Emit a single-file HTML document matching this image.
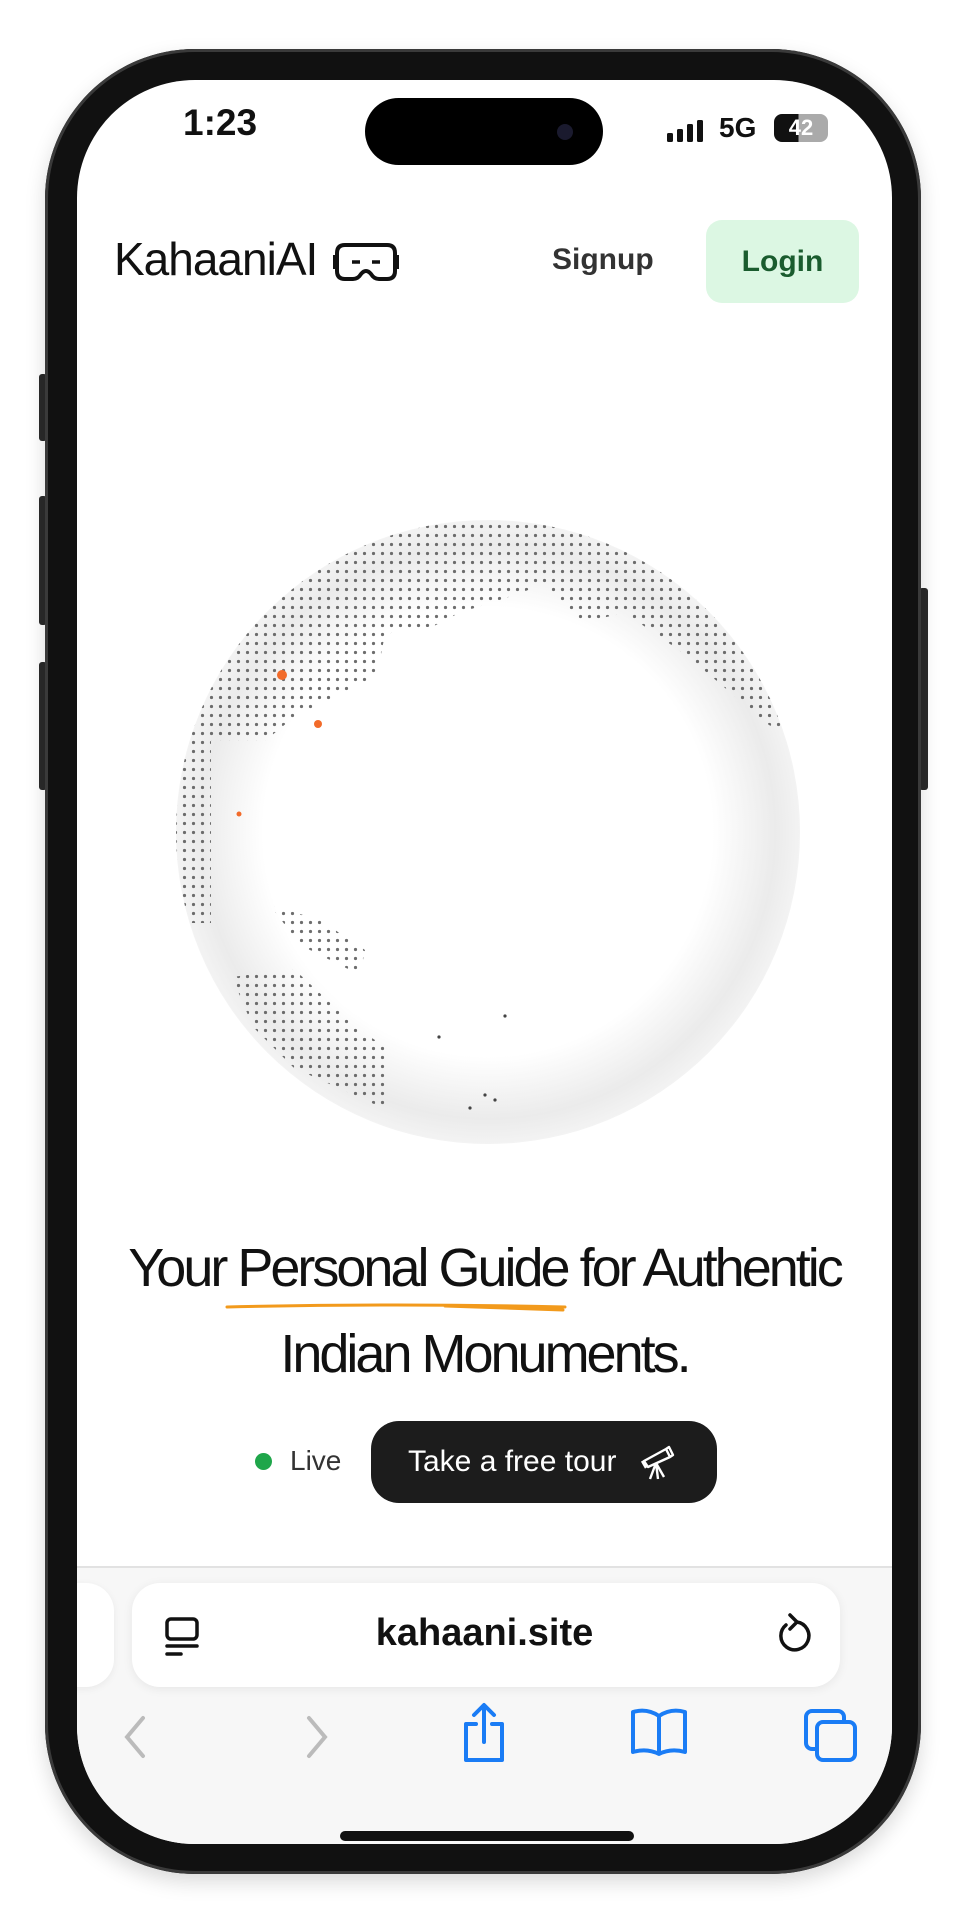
<!DOCTYPE html>
<html><head><meta charset="utf-8"><style>
*{margin:0;padding:0;box-sizing:border-box}
body{width:968px;height:1920px;background:#fff;position:relative;overflow:hidden;font-family:"Liberation Sans",sans-serif}
.abs{position:absolute}
.phone{left:45px;top:49px;width:876px;height:1825px;border-radius:150px;background:#111;box-shadow:0 0 0 3px #3a3a3a inset, 0 8px 20px rgba(0,0,0,.15)}
.screen{left:77px;top:80px;width:815px;height:1764px;border-radius:118px;background:#fff;overflow:hidden}
.btn{background:#2a2a2a;border-radius:3px}
</style></head><body>
<div class="abs btn" style="left:39px;top:374px;width:8px;height:67px"></div>
<div class="abs btn" style="left:39px;top:496px;width:8px;height:129px"></div>
<div class="abs btn" style="left:39px;top:662px;width:8px;height:128px"></div>
<div class="abs btn" style="left:919px;top:588px;width:9px;height:202px"></div>
<div class="abs phone"></div>
<div class="abs screen">
 <div class="abs" style="left:106px;top:22px;font-size:37px;font-weight:bold;color:#111">1:23</div>
 <div class="abs" style="left:288px;top:18px;width:238px;height:67px;border-radius:34px;background:#000"></div>
 <div class="abs" style="left:480px;top:44px;width:16px;height:16px;border-radius:50%;background:#1a1a2e"></div>
 <svg class="abs" style="left:590px;top:40px" width="40" height="22"><rect x="0" y="13" width="6" height="9" rx="1.5" fill="#111"/><rect x="10" y="9" width="6" height="13" rx="1.5" fill="#111"/><rect x="20" y="4" width="6" height="18" rx="1.5" fill="#111"/><rect x="30" y="0" width="6" height="22" rx="1.5" fill="#111"/></svg>
 <div class="abs" style="left:642px;top:32px;font-size:28px;font-weight:bold;color:#111">5G</div>
 <div class="abs" style="left:697px;top:34px;width:54px;height:28px;border-radius:8px;background:linear-gradient(90deg,#111 0 45%,#aaa 45%);color:#fff;font-size:22px;font-weight:bold;text-align:center;line-height:28px">42</div>
 <div class="abs" style="left:37px;top:152px;font-size:46px;color:#111;letter-spacing:-1px">KahaaniAI</div>
 <svg class="abs" style="left:256px;top:161px" width="66" height="42" viewBox="0 0 66 42"><path d="M12 4 H54 Q62 4 62 12 V30 Q62 38 54 38 H46 Q41 38 38 33 Q33 27 28 33 Q25 38 20 38 H12 Q4 38 4 30 V12 Q4 4 12 4Z" fill="none" stroke="#111" stroke-width="4"/><path d="M1 14V28M65 14V28" stroke="#111" stroke-width="3"/><path d="M19 21h8M39 21h8" stroke="#111" stroke-width="3.5"/></svg>
 <div class="abs" style="left:475px;top:163px;font-size:30px;font-weight:bold;color:#333">Signup</div>
 <div class="abs" style="left:629px;top:140px;width:153px;height:83px;border-radius:16px;background:#dcf7e3;color:#1a5c2e;font-size:30px;font-weight:bold;text-align:center;line-height:83px">Login</div>
 <svg class="abs" style="left:0;top:0" width="815" height="1200" viewBox="77 80 815 1200">
  <defs>
   <radialGradient id="g" cx="0.5" cy="0.5" r="0.5"><stop offset="0.72" stop-color="#fff"/><stop offset="0.92" stop-color="#ebebeb"/><stop offset="1" stop-color="#f3f3f3"/></radialGradient>
   <pattern id="d" width="9" height="9" patternUnits="userSpaceOnUse"><circle cx="4.5" cy="4.5" r="1.6" fill="#555"/></pattern>
   <clipPath id="land">
    <polygon points="170,520 830,520 798,741 769,725 686,655 625,613 583,622 542,584 521,593 459,613 434,626 385,634 377,675 294,717 265,741 211,741 211,923 170,923"/>
    <polygon points="232,977 294,969 356,1027 385,1047 385,1109 294,1068 253,1027"/>
    <polygon points="270,905 320,920 365,950 360,975 300,945"/>
   </clipPath>
   <clipPath id="sph"><circle cx="488" cy="832" r="312"/></clipPath>
  </defs>
  <circle cx="488" cy="832" r="312" fill="url(#g)"/>
  <g clip-path="url(#sph)"><rect x="170" y="500" width="660" height="650" fill="url(#d)" clip-path="url(#land)" opacity=".85"/></g>
  <circle cx="282" cy="675" r="5" fill="#f26b2a"/>
  <circle cx="318" cy="724" r="4" fill="#f26b2a"/>
  <circle cx="239" cy="814" r="2.5" fill="#f26b2a"/>
  <circle cx="505" cy="1016" r="1.6" fill="#444"/><circle cx="439" cy="1037" r="1.6" fill="#444"/>
  <circle cx="485" cy="1095" r="1.6" fill="#444"/><circle cx="495" cy="1100" r="1.6" fill="#444"/><circle cx="470" cy="1108" r="1.6" fill="#444"/>
 </svg>
 <div class="abs" style="left:0;width:815px;top:1145px;text-align:center;font-size:54px;letter-spacing:-3px;color:#111;line-height:86px">Your Personal Guide for Authentic<br>Indian Monuments.</div>
 <svg class="abs" style="left:148px;top:1222px" width="345" height="12"><path d="M2 5 Q170 1 340 5 M220 4 Q280 6 338 8" stroke="#f29a1c" stroke-width="3" fill="none" stroke-linecap="round"/></svg>
 <div class="abs" style="left:178px;top:1373px;width:17px;height:17px;border-radius:50%;background:#1fa64a"></div>
 <div class="abs" style="left:213px;top:1365px;font-size:28px;color:#333">Live</div>
 <div class="abs" style="left:294px;top:1341px;width:346px;height:82px;border-radius:28px;background:#1c1c1c;color:#fff;font-size:30px;line-height:82px;padding-left:37px">Take a free tour</div>
 <svg class="abs" style="left:563px;top:1361px" width="36" height="40" viewBox="0 0 36 40"><path d="M4 20 L26 8 L30 16 L8 26Z M2 20 l4 7 M26 8 l3-2 4 8 -3 2 M16 22 L10 38 M16 22 L18 38 M16 22 L24 36" stroke="#fff" stroke-width="2.4" fill="none" stroke-linejoin="round"/></svg>
 <div class="abs" style="left:0;top:1486px;width:815px;height:300px;background:#f7f7f7;border-top:2px solid #e2e2e2"></div>
 <div class="abs" style="left:-30px;top:1503px;width:67px;height:104px;border-radius:28px;background:#fff;box-shadow:0 2px 8px rgba(0,0,0,.06)"></div>
 <div class="abs" style="left:55px;top:1503px;width:708px;height:104px;border-radius:28px;background:#fff;box-shadow:0 2px 10px rgba(0,0,0,.07)"></div>
 <div class="abs" style="left:0;width:815px;top:1532px;text-align:center;font-size:38px;font-weight:bold;color:#111">kahaani.site</div>
 <svg class="abs" style="left:86px;top:1536px" width="40" height="42" viewBox="0 0 40 42"><rect x="4" y="3" width="30" height="20" rx="4" fill="none" stroke="#111" stroke-width="3.5"/><path d="M4 30H34M4 38H18" stroke="#111" stroke-width="3.5" stroke-linecap="round"/></svg>
 <svg class="abs" style="left:696px;top:1532px" width="40" height="46" viewBox="0 0 40 46"><path d="M13 13 A14 14 0 1 0 24 10" fill="none" stroke="#111" stroke-width="3.5" stroke-linecap="round"/><path d="M17 3 L24 10 L17 17" fill="none" stroke="#111" stroke-width="3.5" stroke-linecap="round" stroke-linejoin="round"/></svg>
 <svg class="abs" style="left:38px;top:1634px" width="40" height="46"><path d="M28 4 L12 23 L28 42" stroke="#bbb" stroke-width="4" fill="none" stroke-linecap="round"/></svg>
 <svg class="abs" style="left:220px;top:1634px" width="40" height="46"><path d="M12 4 L28 23 L12 42" stroke="#bbb" stroke-width="4" fill="none" stroke-linecap="round"/></svg>
 <svg class="abs" style="left:383px;top:1622px" width="48" height="62"><path d="M16 22H6V58H42V22H32M24 40V4M14 13L24 3L34 13" stroke="#1a7cf5" stroke-width="4" fill="none" stroke-linecap="round" stroke-linejoin="round"/></svg>
 <svg class="abs" style="left:552px;top:1626px" width="60" height="52"><path d="M30 10 Q18 2 4 6 V46 Q18 42 30 48 Q42 42 56 46 V6 Q42 2 30 10Z M30 10V48" stroke="#1a7cf5" stroke-width="4" fill="none" stroke-linejoin="round"/></svg>
 <svg class="abs" style="left:726px;top:1628px" width="56" height="56"><rect x="3" y="3" width="38" height="38" rx="6" fill="none" stroke="#1a7cf5" stroke-width="4"/><rect x="14" y="14" width="38" height="38" rx="6" fill="#f7f7f7" stroke="#1a7cf5" stroke-width="4"/></svg>
 <div class="abs" style="left:263px;top:1751px;width:294px;height:10px;border-radius:5px;background:#111"></div>
</div>
</body></html>
